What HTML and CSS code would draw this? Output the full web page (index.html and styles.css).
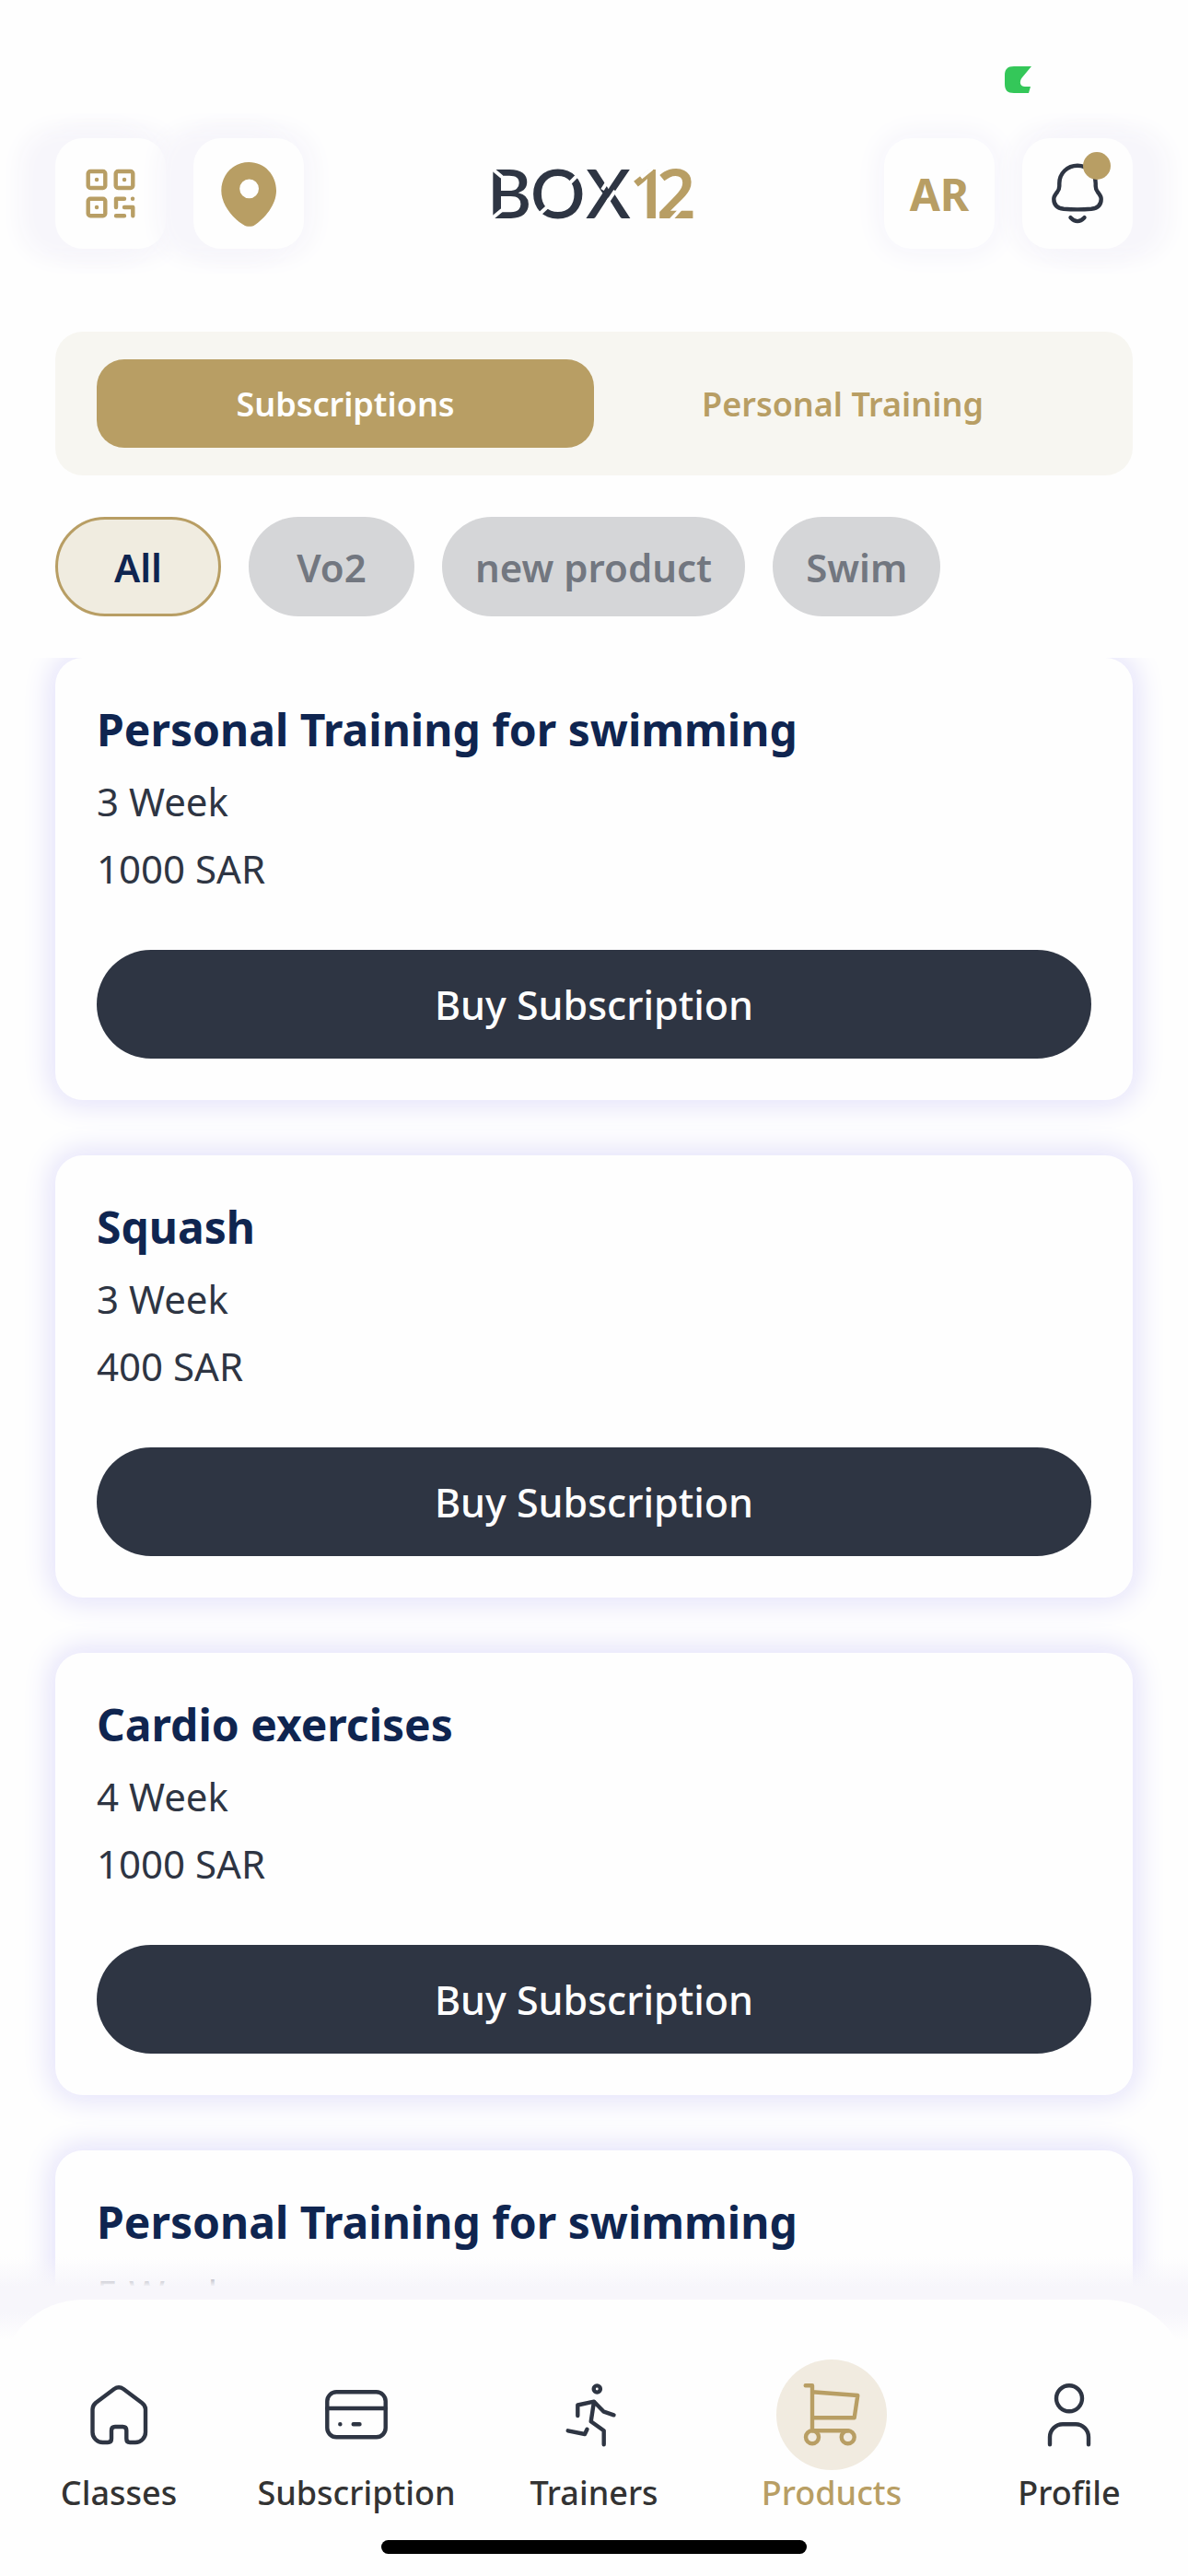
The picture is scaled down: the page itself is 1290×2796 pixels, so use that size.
FILE: index.html
```html
<!DOCTYPE html>
<html lang="en">
<head>
    <meta charset="UTF-8">
    <meta name="viewport" content="width=device-width, initial-scale=1.0">
    <title>BOX12 - Products</title>
    <link rel="stylesheet" href="styles.css">
</head>
<body>
    <div class="status-bar">
        <svg class="status-icon" viewBox="0 0 29 29" aria-hidden="true">
            <path d="M10 0H29L19 12C15 17 17 22 22 22H28L26 29H10C3 29 0 26 0 19V10C0 3 3 0 10 0Z" fill="#34c759"/>
        </svg>
    </div>

    <header class="header">
        <div class="header-group">
            <button class="icon-button shadow-left" aria-label="Scan QR code">
                <svg class="icon gold" viewBox="0 0 120 120">
                    <rect x="35.7" y="36" width="18.6" height="18" rx="2.5"/>
                    <rect x="65.7" y="36" width="18.6" height="18" rx="2.5"/>
                    <rect x="35.7" y="65.7" width="18.6" height="18.6" rx="2.5"/>
                    <path d="M45 45h.1M75 45h.1M45 75h.1M66 75V65.7H75M84 65.7h.1M75 75H84.3V84.3M66 84.3H75"/>
                </svg>
            </button>
            <button class="icon-button shadow-left" aria-label="Branches">
                <svg class="icon" viewBox="0 0 120 120">
                    <path fill="#b89e64" fill-rule="evenodd" d="M60.3 26C43 26 30.3 40 30.3 57C30.3 72 43 88 56 95Q57.5 95.7 59 95.7H62.5Q64 95.7 65.5 95C78 87 90 72 90 57C90 40 77.5 26 60.3 26ZM60.6 44.4a10.4 10.4 0 1 1 0 20.8a10.4 10.4 0 1 1 0-20.8Z"/>
                </svg>
            </button>
        </div>
        <svg class="logo" viewBox="0 0 220 60" role="img" aria-label="BOX12">
            <text class="logo-text" y="57" x="-6 41 101">BOX</text>
            <text class="logo-text logo-number" y="57" x="148 178">12</text>
            <path class="logo-cut" d="M-2 2L10 12M-2 58L10 48M84 18.3L98 4.3M49 54L61 43M119 26L126 15M125 39L133 27M161 12.6L173 3M193 59L204 47"/>
        </svg>
        <div class="header-group">
            <button class="icon-button shadow-center" aria-label="Switch to Arabic">AR</button>
            <button class="icon-button shadow-right" aria-label="Notifications">
                <svg class="icon dark" viewBox="0 0 120 120">
                    <path d="M60 29.7C49 29.7 40.3 38 40.3 49V52C40.3 55 39.5 56.5 38 58.5C35.5 61.5 34.3 63 34.3 66C34.3 72 38 76 45 76.8C55 77.6 65 77.6 75 76.8C82 76 85.7 72 85.7 66C85.7 63 84.5 61.5 82 58.5C80.5 56.5 79.7 55 79.7 52V49C79.7 38 71 29.7 60 29.7ZM52.5 86.2Q60 94 67.5 86.2"/>
                </svg>
                <span class="badge"></span>
            </button>
        </div>
    </header>

    <main class="content">
        <div class="tabs">
            <button class="tab active">Subscriptions</button>
            <button class="tab">Personal Training</button>
        </div>

        <div class="filters">
            <button class="filter active">All</button>
            <button class="filter">Vo2</button>
            <button class="filter">new product</button>
            <button class="filter">Swim</button>
        </div>

        <div class="products">
            <section class="card">
                <h2>Personal Training for swimming</h2>
                <p>3 Week</p>
                <p>1000 SAR</p>
                <button class="buy-button">Buy Subscription</button>
            </section>
            <section class="card">
                <h2>Squash</h2>
                <p>3 Week</p>
                <p>400 SAR</p>
                <button class="buy-button">Buy Subscription</button>
            </section>
            <section class="card">
                <h2>Cardio exercises</h2>
                <p>4 Week</p>
                <p>1000 SAR</p>
                <button class="buy-button">Buy Subscription</button>
            </section>
            <section class="card">
                <h2>Personal Training for swimming</h2>
                <p>5 Week</p>
            </section>
        </div>
    </main>

    <footer class="bottom-bar">
        <nav class="nav">
            <a class="nav-item" href="#classes">
                <svg class="icon dark" viewBox="0 0 120 120">
                    <path d="M31.5 54Q31.5 50 35 47L55 32Q60 28.5 65 32L85 47Q89 50 89 54V79a11 11 0 0 1-11 11H72q-3.7 0-3.7-4V77q0-4-4-4H56q-4 0-4 4V86q0 4-4 4H42.5a11 11 0 0 1-11-11Z"/>
                </svg>
                <span>Classes</span>
            </a>
            <a class="nav-item" href="#subscription">
                <svg class="icon dark" viewBox="0 0 120 120">
                    <rect x="28.3" y="35.3" width="63.4" height="49" rx="10"/>
                    <path d="M28.3 53H91.7M42.3 70.3h.1M56.7 70.3H63.5"/>
                </svg>
                <span>Subscription</span>
            </a>
            <a class="nav-item" href="#trainers">
                <svg class="icon dark" viewBox="0 0 120 120">
                    <circle cx="63.3" cy="32" r="3.6"/>
                    <path d="M42.3 61V49.5L60 45.7L70.7 56.7L81.5 60.3M60 45.7L56.7 67.3L70.7 77.3V92.3M31.7 77.3L50 81L52.5 75.7"/>
                </svg>
                <span>Trainers</span>
            </a>
            <a class="nav-item active" href="#products">
                <svg class="icon gold" viewBox="0 0 120 120">
                    <path d="M31.7 28.3H39V77.3H77.7M39 35.3L88.3 39L84.7 63.3H39"/>
                    <circle cx="39" cy="84.3" r="7"/>
                    <circle cx="77.7" cy="84.3" r="7"/>
                </svg>
                <span>Products</span>
            </a>
            <a class="nav-item" href="#profile">
                <svg class="icon dark" viewBox="0 0 120 120">
                    <circle cx="60" cy="42.3" r="14"/>
                    <path d="M39 92.3V84.3a14 14 0 0 1 14-14H67a14 14 0 0 1 14 14V92.3"/>
                </svg>
                <span>Profile</span>
            </a>
        </nav>
        <div class="home-indicator"></div>
    </footer>
</body>
</html>
```
FILE: styles.css
```css
* {
    box-sizing: border-box;
}
body {
    font-family: "Noto Sans", sans-serif;
    display: flex;
    flex-direction: column;
    height: 100vh;
    margin: 0;
    background-color: #fefefe;
    color: #2e3543;
}
button {
    font-family: inherit;
    border: none;
    padding: 0;
    cursor: pointer;
}
.icon {
    display: block;
    width: 120px;
    height: 120px;
    fill: none;
    stroke-width: 4.4;
    stroke-linecap: round;
    stroke-linejoin: round;
}
.dark {
    stroke: #2e3543;
}
.gold {
    stroke: #b89e64;
}

/* Status bar */
.status-bar {
    display: flex;
    justify-content: flex-end;
    height: 150px;
    padding: 72px 170px 0 0;
}
.status-icon {
    width: 29px;
    height: 29px;
}

/* Header */
.header {
    display: flex;
    justify-content: space-between;
    align-items: center;
    padding: 0 60px;
}
.header-group {
    display: flex;
    gap: 30px;
}
.icon-button {
    position: relative;
    width: 120px;
    height: 120px;
    border-radius: 30px;
    background-color: #fefefe;
    color: #b89e64;
    font-size: 48px;
    font-weight: 700;
}
.shadow-left {
    box-shadow: -27px 0 24px 12px #f7f6fb, 0 0 24px 12px #f7f6fb;
}
.shadow-center {
    box-shadow: 0 0 30px 6px #f5f4fb;
}
.shadow-right {
    box-shadow: 27px 0 24px 12px #f7f6fb, 0 0 24px 12px #f7f6fb;
}
.badge {
    position: absolute;
    top: 15px;
    right: 24px;
    width: 30px;
    height: 30px;
    border-radius: 50%;
    background-color: #b89e64;
}
.logo {
    width: 220px;
    height: 60px;
    overflow: visible;
}
.logo-text {
    font-family: Lato, sans-serif;
    font-size: 74px;
    font-weight: 600;
    fill: #2e3543;
}
.logo-number {
    font-family: "Noto Sans", sans-serif;
    fill: #b89e64;
}
.logo-cut {
    stroke: #fefefe;
    stroke-width: 4;
}

/* Products page */
.content {
    display: flex;
    flex-direction: column;
    flex: 1;
    gap: 45px;
    min-height: 0;
    padding: 90px 0 15px;
}
.tabs {
    display: flex;
    margin: 0 60px;
    padding: 30px 45px;
    border-radius: 30px;
    background-color: #f7f6f1;
}
.tab {
    flex: 1;
    height: 96px;
    border-radius: 30px;
    background: none;
    color: #b89e64;
    font-size: 36px;
    font-weight: 600;
}
.tab.active {
    background-color: #b89e64;
    color: #fefefe;
}
.filters {
    display: flex;
    gap: 30px;
    padding: 0 60px;
}
.filter {
    min-width: 180px;
    height: 108px;
    padding: 0 36px;
    border-radius: 54px;
    background-color: #d5d6d8;
    color: #727780;
    font-size: 42px;
    font-weight: 600;
}
.filter.active {
    border: 3px solid #b89e64;
    background-color: #f0ece0;
    color: #0f2550;
}
.products {
    display: flex;
    flex-direction: column;
    flex: 1;
    gap: 60px;
    min-height: 0;
    padding: 0 60px;
    overflow: hidden;
}
.card {
    display: flex;
    flex-direction: column;
    flex-shrink: 0;
    gap: 16px;
    padding: 45px;
    border-radius: 30px;
    background-color: #fefefe;
    box-shadow: 0 0 30px 6px #e3e1fa;
}
.card h2 {
    margin: 0;
    color: #0f2550;
    font-size: 48px;
    font-weight: 700;
    line-height: 66px;
}
.card p {
    margin: 0;
    font-size: 42px;
    line-height: 57px;
}
.buy-button {
    height: 118px;
    margin-top: 44px;
    border-radius: 59px;
    background-color: #2e3543;
    color: #fefefe;
    font-size: 43px;
    font-weight: 500;
}

/* Bottom navigation, fades out the end of the list */
.bottom-bar {
    position: relative;
    margin-top: -46px;
    padding-top: 46px;
    background: linear-gradient(rgba(247, 246, 251, 0), #f7f6fb 32px, #f7f6fb 60px, #fefefe 90px);
}
.nav {
    display: flex;
    padding: 65px 0 27px;
    border-radius: 90px 90px 0 0;
    background-color: #fefefe;
}
.nav-item {
    display: flex;
    flex-direction: column;
    flex: 1 1 0;
    align-items: center;
    color: #333;
    font-size: 36px;
    font-weight: 500;
    line-height: 49px;
    text-decoration: none;
}
.nav-item.active {
    color: #b89e64;
}
.nav-item.active .icon {
    border-radius: 50%;
    background-color: #f1ebe0;
}
.home-indicator {
    width: 462px;
    height: 15px;
    margin: 0 auto 24px;
    border-radius: 8px;
    background-color: #000;
}
```
